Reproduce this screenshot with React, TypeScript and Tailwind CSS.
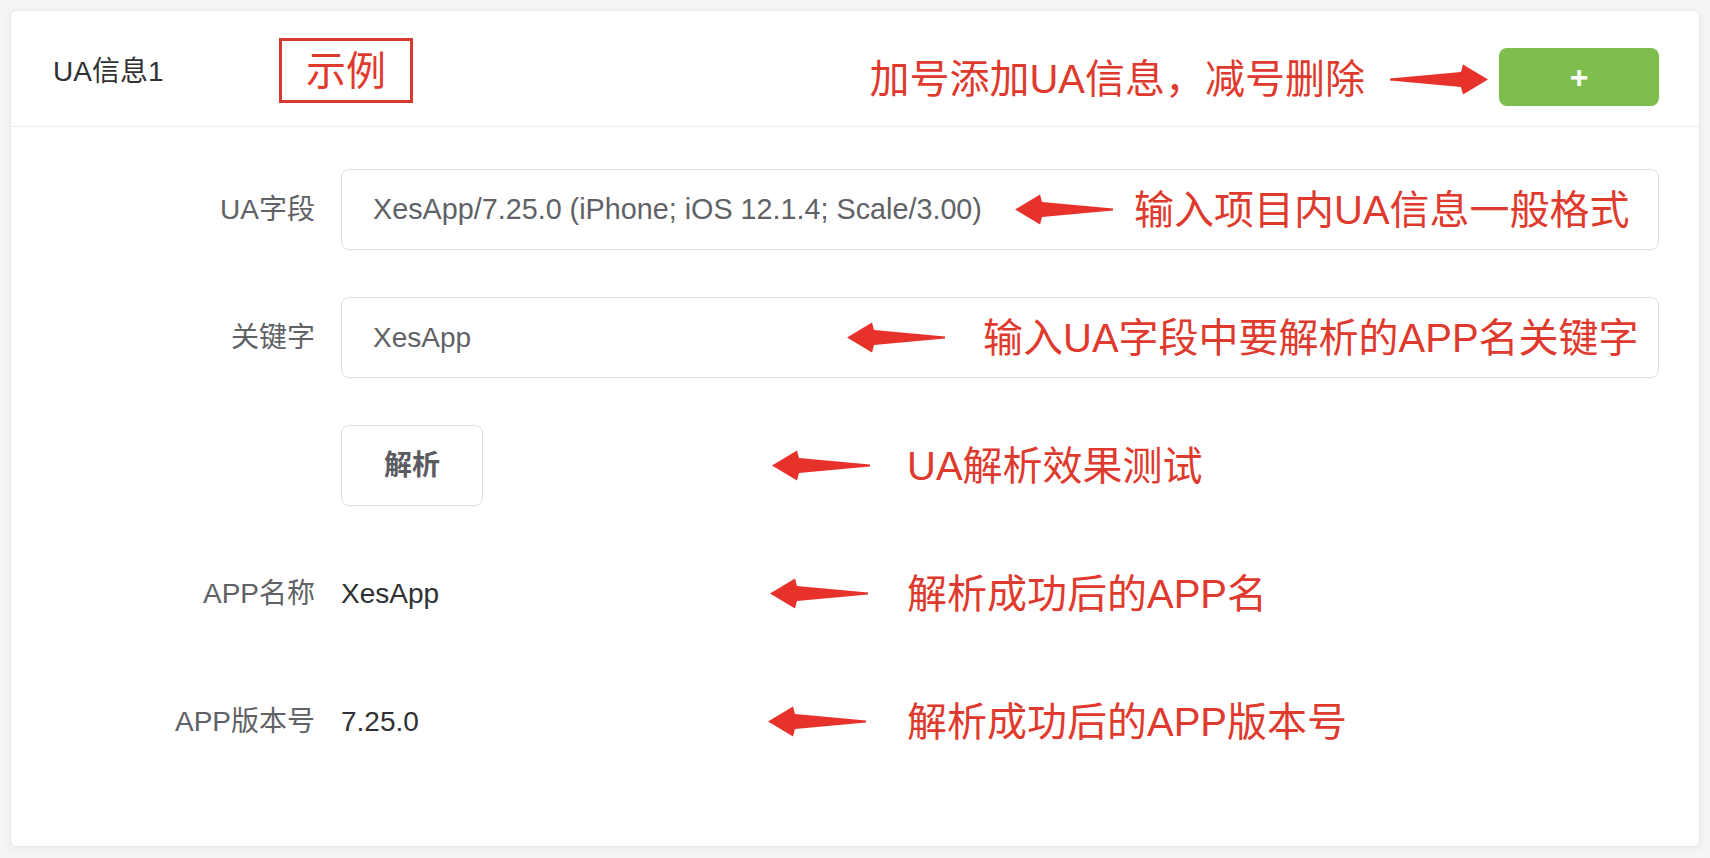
import React from "react";

function Arrow({ dir = "left" }: { dir?: "left" | "right" }) {
  return (
    <svg width="98" height="31" viewBox="0 0 98 31" className="shrink-0">
      <polygon
        points="0,15.5 25,0.5 27,8 98,14.5 98,16.5 27,23 25,30.5"
        fill="#e6322a"
        transform={dir === "right" ? "translate(98,0) scale(-1,1)" : undefined}
      />
    </svg>
  );
}

function Note({ text, gap, className }: { text: string; gap: string; className: string }) {
  return (
    <div className={`absolute top-1/2 -translate-y-1/2 flex items-center pointer-events-none ${gap} ${className}`}>
      <Arrow />
      <span className="text-[40px] leading-[48px] text-[#df3a2e] whitespace-nowrap">{text}</span>
    </div>
  );
}

function Row({ label, children }: { label: string; children: React.ReactNode }) {
  return (
    <div className="relative flex items-center h-[81px]">
      <div className="w-[330px] shrink-0 pr-[26px] text-right text-[28px] leading-[32px] text-[#606266]">
        {label}
      </div>
      <div className="flex-1 pr-[40px] flex items-center h-full">{children}</div>
    </div>
  );
}

export default function App() {
  return (
    <div className="min-h-[858px] bg-[#f4f5f7] p-[10px] font-['Liberation_Sans','Noto_Sans_CJK_SC',sans-serif]">
      <div className="bg-white border border-[#e6e8ec] rounded-[6px] shadow-[0_2px_8px_rgba(0,0,0,0.05)]">
        {/* HEADER */}
        <div className="flex items-start h-[116px] pl-[42px] pr-[40px] border-b border-[#ebeef5]">
          <div className="w-[226px] mt-[45px] text-[28px] leading-[32px] text-[#303133]">UA信息1</div>
          <div className="mt-[27px] w-[134px] h-[65px] border-[3px] border-[#d63a2f] flex items-center justify-center text-[40px] leading-none text-[#df3a2e]">
            示例
          </div>
          <div className="ml-auto mt-[37px] flex items-center">
            <span className="mt-[4px] text-[40px] leading-[48px] text-[#df3a2e] whitespace-nowrap">
              加号添加UA信息，减号删除
            </span>
            <div className="ml-[25px] mr-[11px] mt-[4px]">
              <Arrow dir="right" />
            </div>
            <button className="w-[160px] h-[58px] rounded-[8px] bg-[#7dbe4f] text-white text-[32px] font-bold leading-none flex items-center justify-center">
              +
            </button>
          </div>
        </div>

        {/* BODY */}
        <div className="flex flex-col gap-[47px] pt-[42px] pb-[84px]">
          <Row label="UA字段">
            <input
              readOnly
              defaultValue="XesApp/7.25.0 (iPhone; iOS 12.1.4; Scale/3.00)"
              className="w-full h-full border border-[#dcdfe6] rounded-[8px] pl-[31px] text-[28.75px] text-[#606266] outline-none bg-white"
            />
            <Note text="输入项目内UA信息一般格式" gap="gap-[21px]" className="left-[1004px]" />
          </Row>

          <Row label="关键字">
            <input
              readOnly
              defaultValue="XesApp"
              className="w-full h-full border border-[#dcdfe6] rounded-[8px] pl-[31px] text-[28px] text-[#606266] outline-none bg-white"
            />
            <Note text="输入UA字段中要解析的APP名关键字" gap="gap-[38px]" className="left-[836px]" />
          </Row>

          <Row label="">
            <button className="w-[142px] h-full border border-[#dcdfe6] rounded-[8px] bg-white text-[28px] font-bold text-[#5a5c61]">
              解析
            </button>
            <Note text="UA解析效果测试" gap="gap-[37px]" className="left-[761px]" />
          </Row>

          <Row label="APP名称">
            <span className="text-[28px] leading-[32px] text-[#303133]">XesApp</span>
            <Note text="解析成功后的APP名" gap="gap-[39px]" className="left-[759px]" />
          </Row>

          <Row label="APP版本号">
            <span className="text-[28px] leading-[32px] text-[#303133]">7.25.0</span>
            <Note text="解析成功后的APP版本号" gap="gap-[41px]" className="left-[757px]" />
          </Row>
        </div>
      </div>
    </div>
  );
}
